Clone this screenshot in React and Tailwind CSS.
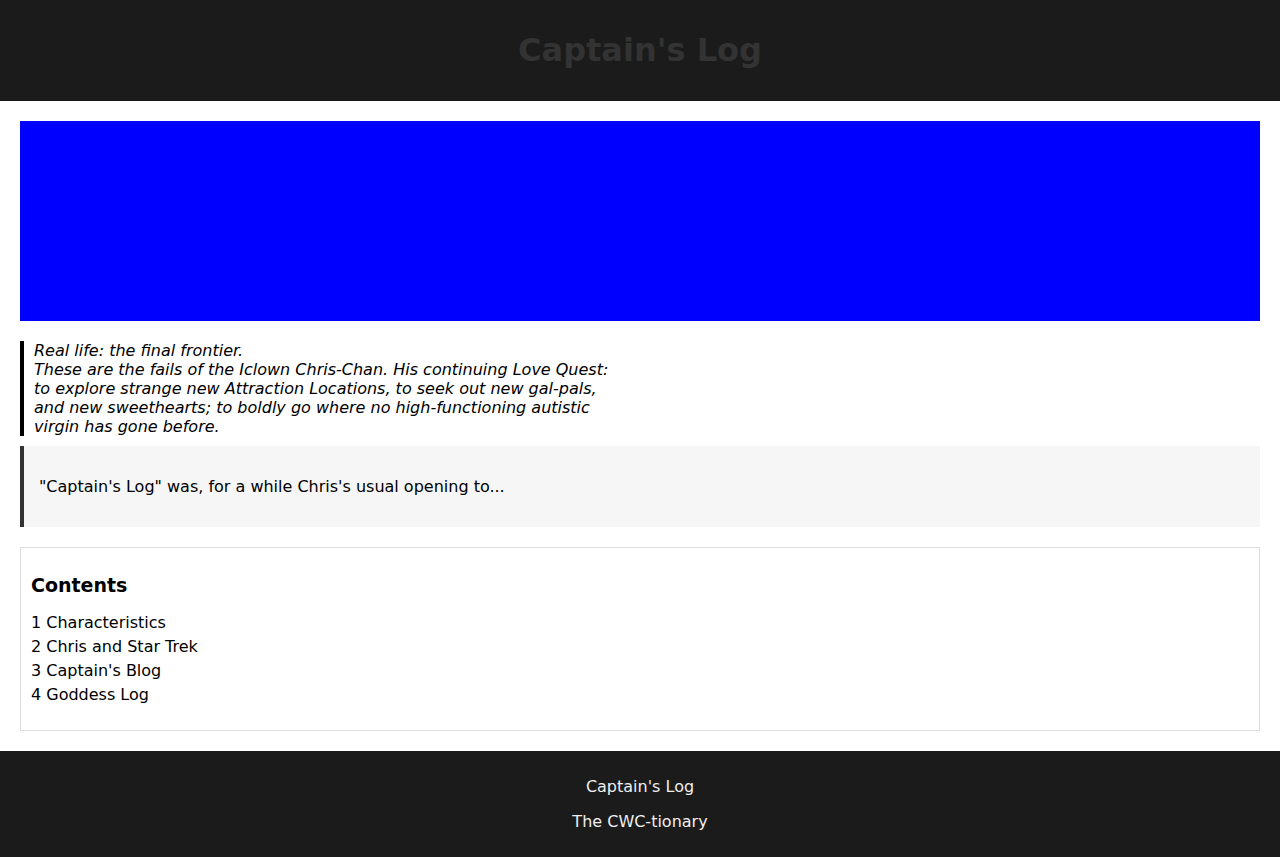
import React from "react";

const contents = [
  "1 Characteristics",
  "2 Chris and Star Trek",
  "3 Captain's Blog",
  "4 Goddess Log",
];

const App = () => {
  return (
    <div className="min-h-screen bg-white text-black font-['DejaVu_Sans',sans-serif]">
      <header className="bg-[#1b1b1b] py-[32px] text-center">
        <h1 className="text-[32px] leading-[37px] font-bold text-[#333333]">
          Captain's Log
        </h1>
      </header>

      <main className="p-[20px] flex flex-col">
        <div className="h-[200px] bg-[#0000ff]" />

        <div className="mt-[20px] max-w-[600px] border-l-4 border-black pl-[10px] italic text-[16px] leading-[19px]">
          Real life: the final frontier.
          <br />
          These are the fails of the Iclown Chris-Chan. His continuing Love
          Quest: to explore strange new Attraction Locations, to seek out new
          gal-pals, and new sweethearts; to boldly go where no
          high-functioning autistic virgin has gone before.
        </div>

        <div className="mt-[10px] bg-[#f6f6f6] border-l-4 border-[#333333] px-[15px] py-[31px] text-[16px] leading-[19px]">
          "Captain's Log" was, for a while Chris's usual opening to...
        </div>

        <div className="mt-[20px] border border-[#dddddd] px-[10px] pt-[26px] pb-[23px]">
          <h3 className="text-[19px] leading-[22px] font-bold">Contents</h3>
          <ul className="mt-[15px] text-[16px] leading-[24px]">
            {contents.map((item) => (
              <li key={item}>{item}</li>
            ))}
          </ul>
        </div>
      </main>

      <footer className="bg-[#1b1b1b] text-[#eeeeee] text-center text-[16px] leading-[19px] pt-[26px] pb-[28px]">
        <p>Captain's Log</p>
        <p className="mt-[16px]">The CWC-tionary</p>
      </footer>
    </div>
  );
};

export default App;
